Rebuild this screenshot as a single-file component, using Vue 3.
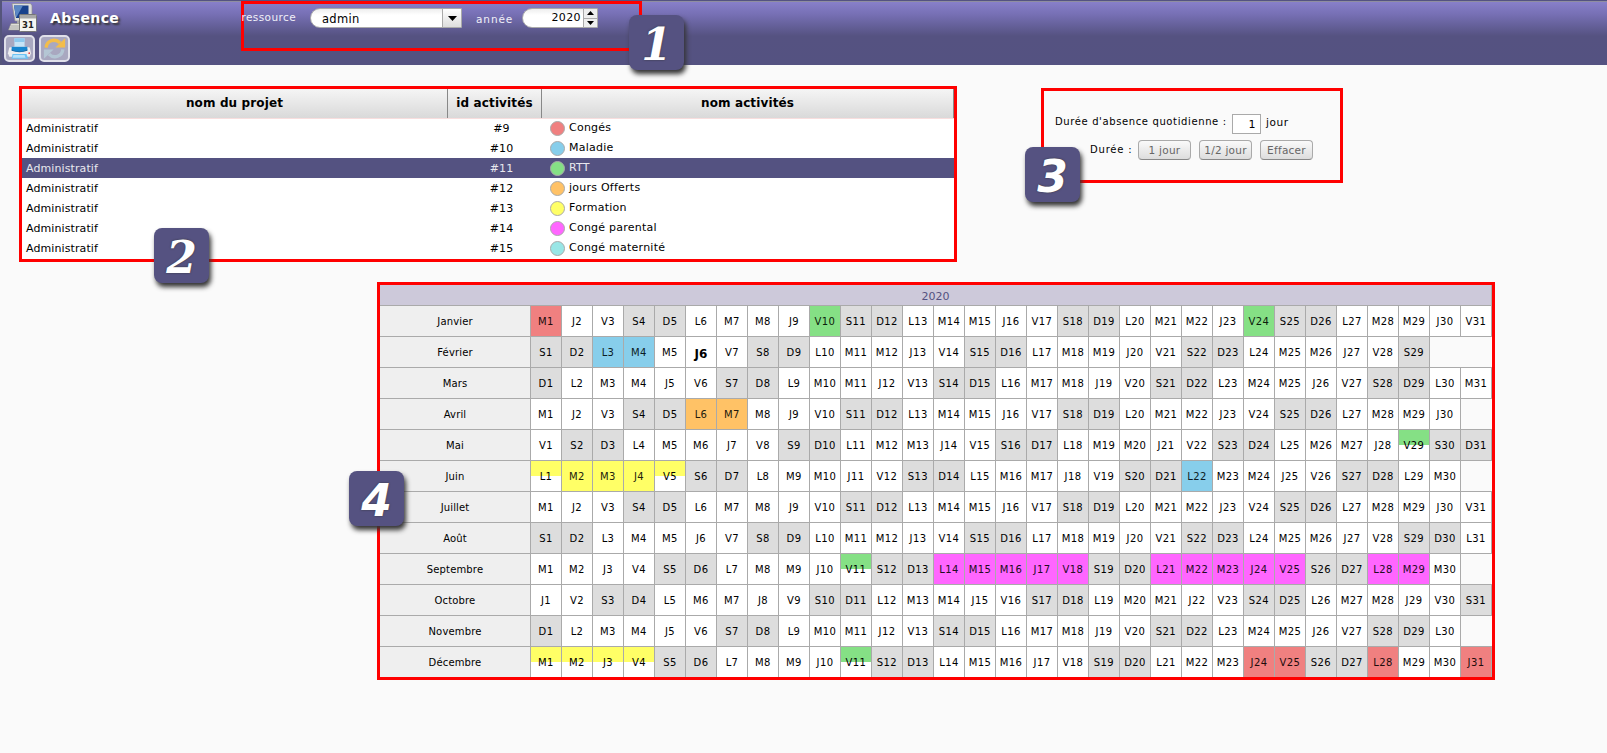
<script setup>
const activities = [
  { id: '#9', name: 'Congés', color: '#f08080' },
  { id: '#10', name: 'Maladie', color: '#87ceeb' },
  { id: '#11', name: 'RTT', color: '#85e085', selected: true },
  { id: '#12', name: 'jours Offerts', color: '#ffc266' },
  { id: '#13', name: 'Formation', color: '#ffff66' },
  { id: '#14', name: 'Congé parental', color: '#ff66ff' },
  { id: '#15', name: 'Congé maternité', color: '#99e6e6' },
]

const monthNames = [
  'Janvier', 'Février', 'Mars', 'Avril', 'Mai', 'Juin',
  'Juillet', 'Août', 'Septembre', 'Octobre', 'Novembre', 'Décembre',
]
const letters = ['D', 'L', 'M', 'M', 'J', 'V', 'S']
const year = 2020
const today = '1-6'

const absences = {
  0: { conge: [1], rtt: [10, 24] },
  1: { maladie: [3, 4] },
  3: { offert: [6, 7] },
  4: { 'rtt half': [29] },
  5: { 'formation half': [1, 5], formation: [2, 3, 4], maladie: [22] },
  8: { 'rtt half': [11], parental: [14, 15, 16, 17, 18, 21, 22, 23, 24, 25, 28, 29] },
  11: { 'formation half': [1, 2, 3, 4], 'rtt half': [11], conge: [24, 25, 28, 31] },
}

function cellClass(m, d, dow) {
  const entry = Object.entries(absences[m] || {}).find(([, days]) => days.includes(d))
  if (entry) return entry[0]
  return dow === 0 || dow === 6 ? 'weekend' : ''
}

const months = monthNames.map((name, m) => {
  const count = new Date(Date.UTC(year, m + 1, 0)).getUTCDate()
  const days = Array.from({ length: count }, (_, i) => {
    const dow = new Date(Date.UTC(year, m, i + 1)).getUTCDay()
    return { label: letters[dow] + (i + 1), cls: cellClass(m, i + 1, dow), today: `${m}-${i + 1}` === today }
  })
  return { name, days, blank: 31 - count }
})
</script>

<template>
  <div class="page">
    <header class="topbar">
      <div class="brand">
        <div class="title-row">
          <svg class="logo" width="30" height="30" viewBox="0 0 30 30">
            <path d="M4 .5h18.500l1.500 2v15.500H7z" fill="#dcdddb" stroke="#8c8d8c" stroke-width=".7" />
            <path d="M6 2.500h14.500v12.500H8z" fill="#18418c" />
            <path d="M6 2.500h9L8.500 14H8z" fill="#5b87c4" />
            <path d="M9 18h6v3H9z" fill="#aaa" />
            <path d="M3 20.500h9v6.500H.5z" fill="#dfdfd8" stroke="#8b8b86" stroke-width=".6" />
            <path d="M3 23h8M2 25h9" stroke="#aaa" />
            <rect x="11.500" y="11.500" width="17" height="17" rx="1" fill="#f5f5f2" stroke="#777" />
            <path d="M12 12h16v3.500H12z" fill="#a8a8a8" />
            <text x="20" y="24.500" text-anchor="middle" class="logo-day">31</text>
          </svg>
          <h1>Absence</h1>
        </div>
        <div class="tools">
          <button class="tool" aria-label="Imprimer">
            <svg width="27" height="24" viewBox="0 0 27 24">
              <path d="M8 1h11v10H8z" fill="#c5e4f7" />
              <path d="M8 1h11v4H8z" fill="#8dc9ee" />
              <path d="M2.500 11q11-3 22 0l1.500 6-1.500 4H2.500L1 17z" fill="#ededf0" />
              <path d="M5 10h17v4q-8.500 3-17 0z" fill="#1886cf" />
              <path d="M5 13q8.500 4 17 0v1.500q-8.500 3-17 0z" fill="#1266a6" />
              <path d="M6 18h15l2 5H5z" fill="#6cc2f4" />
              <path d="M7 19h12l1 3H6z" fill="#b9e2fa" />
              <circle cx="24" cy="17" r="1" fill="#e44" />
            </svg>
          </button>
          <button class="tool" aria-label="Rafraîchir">
            <svg width="27" height="24" viewBox="0 0 27 24">
              <path d="M4.500 11C5 3.500 14 .5 19.500 6" fill="none" stroke="#f3bd4a" stroke-width="3.600" />
              <path d="M25 1v10h-10.500z" fill="#f3bd4a" />
              <path d="M22.500 13C22 20.500 13 23.500 7.500 18" fill="none" stroke="#b4c6d4" stroke-width="3.600" />
              <path d="M2 23v-10h10.500z" fill="#b4c6d4" />
            </svg>
          </button>
        </div>
      </div>

      <section class="filters">
        <label class="res-label">ressource</label>
        <div class="select">
          <span>admin</span>
          <i class="drop"><svg width="9" height="5"><path d="M0 0h9L4.500 5z" /></svg></i>
        </div>
        <label class="year-label">année</label>
        <div class="spinner">
          <span>2020</span>
          <div class="steps">
            <i><svg width="7" height="4"><path d="M0 4h7L3.500 0z" /></svg></i>
            <i><svg width="7" height="4"><path d="M0 0h7L3.500 4z" /></svg></i>
          </div>
        </div>
        <b class="badge b1 slab">1</b>
      </section>
    </header>

    <main>
      <div class="upper">
        <section class="activities">
          <div class="row head">
            <span>nom du projet</span><span>id activités</span><span>nom activités</span>
          </div>
          <div v-for="a in activities" :key="a.id" class="row" :class="{ selected: a.selected }">
            <span class="project">Administratif</span>
            <span class="aid">{{ a.id }}</span>
            <span class="aname"><i class="dot" :style="{ background: a.color }"></i><em>{{ a.name }}</em></span>
          </div>
          <b class="badge b2 slab">2</b>
        </section>

        <section class="duration">
          <div class="line daily">
            <span class="dlabel">Durée d'absence quotidienne :</span>
            <span class="field">1</span>
            <span class="unit">jour</span>
          </div>
          <div class="line choices">
            <span class="clabel">Durée :</span>
            <button>1 jour</button>
            <button>1/2 jour</button>
            <button>Effacer</button>
          </div>
          <b class="badge b3">3</b>
        </section>
      </div>

      <section class="calendar">
        <div class="year">2020</div>
        <div v-for="m in months" :key="m.name" class="month">
          <span class="mname">{{ m.name }}</span>
          <span v-for="d in m.days" :key="d.label" class="day" :class="[d.cls, { today: d.today }]">{{ d.label }}</span>
          <span v-if="m.blank" class="blank"></span>
        </div>
        <b class="badge b4">4</b>
      </section>
    </main>
  </div>
</template>

<style>
body { background: #fafafa; overflow: hidden; }
</style>

<style scoped>
* { box-sizing: border-box; }
.page { width: 1607px; height: 753px; font-family: Verdana, "DejaVu Sans", sans-serif; font-size: 10px; color: #000; background: #fafafa; overflow: hidden; }
button { font-family: inherit; padding: 0; margin: 0; }
i, em { font-style: normal; }

.topbar { display: flex; height: 65px; border-top: 1px solid #545381; border-left: 2px solid #55557b; background: linear-gradient(#8981cb 0, #7770b5 13px, #555281 35px, #545281 100%); box-shadow: inset 0 1px #8f8ea0; }
.brand { width: 239px; padding: 2px 0 0 2px; }
.title-row { display: flex; height: 32px; }
.logo { margin-left: 4px; }
.logo-day { font: bold 8.500px "DejaVu Sans", sans-serif; fill: #222; }
h1 { margin: 6px 0 0 12px; font-size: 14px; line-height: 18px; letter-spacing: .4px; color: #fff; text-shadow: 2px 2px 2px #333; }
.tools { display: flex; gap: 4px; }
.tool { display: flex; align-items: center; justify-content: center; width: 31px; height: 27px; border: 2px solid #e0e0ea; border-radius: 5px; background: #a9a8c0; }
.tool svg { flex: none; width: 25px; height: 23px; }

.filters { position: relative; display: flex; align-items: flex-start; width: 401px; height: 50px; border: 3px solid #f00; color: #f0f0f8; }
.res-label { display: flex; justify-content: flex-end; width: 52px; margin-right: 10px; padding-top: 7px; line-height: 12px; font-size: 10.500px; letter-spacing: .4px; }
.select { display: flex; width: 152px; height: 20px; margin: 4px 0 0 4px; border: 1px solid #aaa; border-radius: 10px 0 0 10px; background: linear-gradient(#eee, #fff 6px); color: #000; overflow: hidden; font-size: 11.500px; letter-spacing: .3px; }
.select span { flex: 1; padding-left: 11px; line-height: 20px; }
.drop { display: flex; align-items: center; justify-content: center; width: 19px; border-left: 1px solid #aaa; background: linear-gradient(#fff, #ddd); }
.year-label { flex: none; width: 60px; padding: 9px 0 0 14px; line-height: 12px; white-space: nowrap; font-size: 10.500px; letter-spacing: .9px; }
.spinner { display: flex; width: 76px; height: 20px; margin: 4px 0 0; border: 1px solid #aaa; border-radius: 10px 0 0 10px; background: linear-gradient(#eee, #fff 6px); color: #000; overflow: hidden; font-size: 11px; letter-spacing: .4px; }
.spinner span { flex: 1; text-align: right; padding-right: 2px; line-height: 17px; }
.steps { display: flex; flex-direction: column; width: 14px; border-left: 1px solid #aaa; background: #eee; }
.steps i { display: flex; flex: 1; align-items: center; justify-content: center; }
.steps i + i { border-top: 1px solid #aaa; }

.badge { position: absolute; z-index: 2; width: 55px; height: 55px; padding-top: 2px; text-align: center; border-radius: 8px; background: #555281; color: #fff; font: italic bold 44px/55px "DejaVu Sans", sans-serif; letter-spacing: 0; box-shadow: 2px 4px 5px #333; text-shadow: 0 0 2px #333; }
.slab { font-family: "DejaVu Serif", serif; }
.b1 { left: 385px; top: 11px; }
.b2 { left: 132px; top: 139px; }
.b3 { left: -19px; top: 56px; }
.b4 { left: -31px; top: 186px; }

main { padding: 21px 0 0 19px; }
.upper { display: flex; gap: 84px; height: 196px; }
.activities { position: relative; width: 938px; height: 176px; border: 3px solid #f00; background: #fff; font-size: 11px; }
.row { display: grid; grid-template-columns: 426px 94px 1fr; height: 20px; line-height: 21px; }
.row.head { height: 30px; margin-bottom: -1px; line-height: 28px; text-align: center; font-size: 12px; font-weight: bold; letter-spacing: .12px; border-bottom: 1px solid #f8dede; background: linear-gradient(#f5f5f5, #d9d9d9); }
.head span { border-right: 1px solid #888; }
.selected { background: #545281; color: #e8e8ee; }
.project { padding-left: 4px; letter-spacing: .1px; }
.aid { padding-left: 13px; text-align: center; letter-spacing: .1px; }
.aname { display: flex; align-items: center; padding-left: 8px; line-height: 18px; letter-spacing: .24px; }
.aname em { height: 20px; }
.dot { width: 15px; height: 15px; margin-right: 4px; border: 1px solid #aaa; border-radius: 50%; }

.duration { position: relative; width: 302px; height: 95px; margin-top: 2px; border: 3px solid #f00; letter-spacing: .62px; }
.line { display: flex; }
.daily { padding: 23px 0 0 11px; height: 49px; }
.dlabel { width: 177px; line-height: 16px; white-space: nowrap; }
.field { width: 29px; height: 20px; border: 1px solid #aaa; background: #fff; text-align: right; padding-right: 4px; line-height: 19px; font-size: 11px; }
.unit { margin-left: 5px; line-height: 17px; font-size: 10.500px; }
.choices { gap: 8px; padding-left: 46px; }
.clabel { width: 40px; line-height: 19px; white-space: nowrap; letter-spacing: .8px; }
.choices button { width: 53px; height: 20px; border: 1px solid #aaa; border-bottom-color: #888; border-radius: 4px; background: linear-gradient(#fafafa, #ddd); color: #666; font-size: 10.500px; line-height: 18px; white-space: nowrap; letter-spacing: .25px; }

.calendar { position: relative; width: 1118px; height: 398px; margin-left: 358px; border: 3px solid #f00; letter-spacing: .4px; }
.year { height: 20px; background: #cdc9da; color: #545281; text-align: center; font-size: 11px; line-height: 24px; letter-spacing: 0; width: 1112px; border-right: 1px solid #aaa; }
.month { display: flex; height: 31px; line-height: 31px; text-align: center; border-top: 1px solid #aaa; }
.mname { width: 150px; background: #efefef; letter-spacing: .15px; }
.day { width: 31px; border-left: 1px solid #aaa; background: #fff; white-space: nowrap; }
.day:nth-child(32) { width: 32px; border-right: 1px solid #aaa; }
.blank { flex: 1; border-left: 1px solid #aaa; }
.day.weekend { background: #ddd; }
.day.conge { background: #f08080; color: #200c0c; }
.day.rtt { background: #85e085; color: #0c200c; }
.day.maladie { background: #87ceeb; color: #0c1c24; }
.day.offert { background: #ffc266; color: #22190c; }
.day.formation { background: #ffff66; color: #22220c; }
.day.parental { background: #ff66ff; color: #220c22; }
.day.half { color: #000; }
.day.rtt.half { background: linear-gradient(#85e085 15px, #fff 15px); }
.day.formation.half { background: linear-gradient(#ffff66 15px, #fff 15px); }
.day.today { font-size: 12px; font-weight: bold; line-height: 34px; letter-spacing: .2px; }
</style>
